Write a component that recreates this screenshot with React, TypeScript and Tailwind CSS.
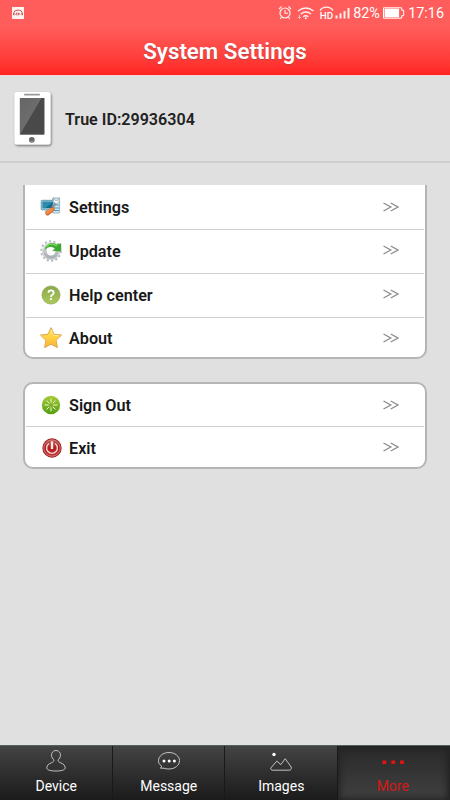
import React from 'react';
import clsx from 'clsx';

interface MenuItem {
  label: string;
  icon: React.ReactNode;
}

function SettingsIcon() {
  return (
    <svg width="22" height="22" viewBox="0 0 22 22">
      <rect x="12.6" y="2" width="7" height="15" rx="0.8" fill="#d6e8f1" stroke="#7798aa" strokeWidth="0.7" />
      <path d="M14.5 9h4.5M15 12h4M13 14.5h6" stroke="#4c98bb" strokeWidth="1" />
      <rect x="1.2" y="4.3" width="13" height="9.5" rx="0.7" fill="#b9dbe7" stroke="#43859f" strokeWidth="0.8" />
      <rect x="2.6" y="5.7" width="10.3" height="6.6" fill="#106d91" />
      <path d="M2.6 5.7h10.3L5 12.3H2.6z" fill="#2f8dab" />
      <path d="M5.5 14h5l.8 2H4.5z" fill="#b5c6ce" />
      <path d="M12.5 11L17 6.2" stroke="#8a989e" strokeWidth="2.4" />
      <path d="M13.4 1.6v4.1l2.9 2.2 3-2.2V1.6l-1.6 2.8h-2.5z" fill="#f7fafc" stroke="#8998a1" strokeWidth="0.6" />
      <path d="M7.5 17.2l4.8-3.8" stroke="#bd5521" strokeWidth="4.4" strokeLinecap="round" />
      <path d="M7.5 17l4.8-3.7" stroke="#f3833c" strokeWidth="3.4" strokeLinecap="round" />
      <path d="M7 16l4.4-3.5" stroke="#ffad70" strokeWidth="0.8" />
    </svg>
  );
}

function UpdateIcon() {
  return (
    <svg width="24" height="24" viewBox="0 0 24 24">
      <defs>
        <linearGradient id="gear" x1="0" y1="0" x2="0" y2="1">
          <stop offset="0" stopColor="#d9dde0" />
          <stop offset="1" stopColor="#a8aeb2" />
        </linearGradient>
      </defs>
      <circle cx="12" cy="12" r="9.7" fill="none" stroke="#b2b7bb" strokeWidth="2" strokeDasharray="2 2.35" />
      <circle cx="12" cy="12" r="6.8" fill="none" stroke="url(#gear)" strokeWidth="4.6" />
      <circle cx="12" cy="12" r="8.4" fill="none" stroke="#eceeef" strokeWidth="0.8" />
      <path d="M6 10.5C6.8 5.2 12.6 2.4 18 5.7L22 4.6V12.2L13.6 11.8l2.4-2.4C13 6.8 8.4 7.3 6 10.5z" fill="#37a92e" stroke="#4cae3b" strokeWidth="0.4" />
      <path d="M7.6 7.7C10 4.7 14.2 4.6 18 7" fill="none" stroke="#82d858" strokeWidth="1.4" />
    </svg>
  );
}

function HelpIcon() {
  return (
    <svg width="20" height="20" viewBox="0 0 20 20">
      <defs>
        <linearGradient id="help" x1="0" y1="0" x2="0" y2="1">
          <stop offset="0" stopColor="#8aa84b" />
          <stop offset="1" stopColor="#adc95a" />
        </linearGradient>
      </defs>
      <circle cx="10" cy="10" r="9.1" fill="url(#help)" stroke="#86a24b" strokeWidth="0.6" />
      <path d="M7.4 7.7Q7.5 5.3 10 5.3t2.7 2.4q0 1.3-1.4 2.1-1.3.7-1.3 2.1" fill="none" stroke="#fff" strokeWidth="1.8" />
      <circle cx="10" cy="14.1" r="1.1" fill="#fff" />
    </svg>
  );
}

function StarIcon() {
  return (
    <svg width="24" height="24" viewBox="0 0 24 24">
      <defs>
        <linearGradient id="star" x1="0" y1="0" x2="0" y2="1">
          <stop offset="0" stopColor="#ffe568" />
          <stop offset="0.5" stopColor="#ffd243" />
          <stop offset="1" stopColor="#f9b138" />
        </linearGradient>
      </defs>
      <path
        d="M12 1.6l3.1 6.7 7.4.8-5.4 5.2 1.3 7.3-6.4-3.4-6.4 3.4 1.3-7.3-5.4-5.2 7.4-.8z"
        fill="url(#star)"
        stroke="#e0a84b"
        strokeWidth="1"
        strokeLinejoin="round"
      />
      <path d="M12 4l2.2 5.2 5.2.6" fill="none" stroke="#fff1a0" strokeWidth="0.8" />
    </svg>
  );
}

function SignOutIcon() {
  return (
    <svg width="20" height="20" viewBox="0 0 20 20">
      <defs>
        <linearGradient id="signout" x1="0" y1="0" x2="0" y2="1">
          <stop offset="0" stopColor="#a8cc35" />
          <stop offset="1" stopColor="#549d14" />
        </linearGradient>
      </defs>
      <circle cx="10" cy="10" r="9.2" fill="url(#signout)" />
      <path
        d="M10 4v3.3M10 12.7V16M4 10h3.3M12.7 10H16M5.8 5.8l2.3 2.3M11.9 11.9l2.3 2.3M5.8 14.2l2.3-2.3M11.9 8.1l2.3-2.3"
        stroke="#f0f8dc"
        strokeWidth="1"
        strokeLinecap="round"
      />
    </svg>
  );
}

function ExitIcon() {
  return (
    <svg className="ml-px" width="20" height="20" viewBox="0 0 20 20">
      <defs>
        <linearGradient id="exit" x1="0" y1="0" x2="0" y2="1">
          <stop offset="0" stopColor="#c35b58" />
          <stop offset="0.5" stopColor="#b21b1c" />
          <stop offset="1" stopColor="#c93430" />
        </linearGradient>
      </defs>
      <circle cx="10" cy="10" r="9.7" fill="#9c2424" />
      <circle cx="10" cy="10" r="8.2" fill="url(#exit)" stroke="#dc8d88" strokeWidth="0.8" />
      <path d="M7 5.5a5.4 5.4 0 1 0 6 0" fill="none" stroke="#f4dada" strokeWidth="1.4" />
      <path d="M10 3.3v7.7" stroke="#f8e8e8" strokeWidth="2.4" />
    </svg>
  );
}

const mainItems: MenuItem[] = [
  { label: 'Settings', icon: <SettingsIcon /> },
  { label: 'Update', icon: <UpdateIcon /> },
  { label: 'Help center', icon: <HelpIcon /> },
  { label: 'About', icon: <StarIcon /> },
];

const accountItems: MenuItem[] = [
  { label: 'Sign Out', icon: <SignOutIcon /> },
  { label: 'Exit', icon: <ExitIcon /> },
];

function MenuGroup({ items, className }: { items: MenuItem[]; className: string }) {
  return (
    <div className={clsx('mx-[23px] grid border-[#b5b5b5] bg-white px-px', className)}>
      {items.map((item, i) => (
        <button
          key={item.label}
          className={clsx(
            'flex items-center pr-[25px] pl-[13px]',
            i > 0 && 'border-t-[1.5px] border-[#d0d0d0]',
            i > 0 && i < items.length - 1 && 'pb-[2px]',
            i === items.length - 1 && 'pt-px'
          )}
        >
          <span className="flex w-6 shrink-0 justify-center">{item.icon}</span>
          <span className="ml-[6px] pt-[2px] text-[16.2px] leading-5 font-semibold text-[#181818]">{item.label}</span>
          <svg className="mb-px ml-auto" width="16" height="10" viewBox="0 0 16 10" fill="none" stroke="#8c8c8c" strokeWidth="1.3">
            <path d="M.5 1l7.3 4-7.3 4M7.7 1L15 5 7.7 9" />
          </svg>
        </button>
      ))}
    </div>
  );
}

function StatusBar() {
  return (
    <div className="flex h-[26px] items-center pr-[6px] pl-3 text-white">
      <svg width="12" height="12" viewBox="0 0 12 12">
        <rect width="12" height="12" fill="#fff4f2" />
        <path d="M1.5 8V6.4Q2 3 6 3t4.5 3.4V8M2 6v2.3M10 6v2.3" fill="none" stroke="#c55a55" strokeWidth="1" />
        <path d="M3.5 7.8l1.4-2.1v2.8M6.5 5.8v2.5M8 7.8l-1-1.7" stroke="#b84b49" strokeWidth="0.8" fill="none" />
      </svg>
      <svg className="ml-auto" width="73" height="16" viewBox="0 0 73 16" fill="none" stroke="#fff" strokeOpacity="0.9">
        <circle cx="7" cy="8" r="5" strokeWidth="1.2" />
        <path d="M7 5v3.3h3M1 4l2.6-2.5M13 4l-2.6-2.5M3.4 12.3L2.3 14M10.6 12.3l1.1 1.7" strokeWidth="1.1" />
        <path d="M20 6q8-6 15.5 0M22.7 9q5.3-3.9 10.3 0M25.2 11.7q2.6-2 5.2 0" strokeWidth="1.4" />
        <circle cx="27.8" cy="13.3" r="1" fill="#fff" stroke="none" />
        <path d="M21.5 10v3M20 12l1.5 1.5L23 12" strokeWidth="0.7" />
        <path d="M42.5 5.8V4.4q6-4.4 12 0v1.4" strokeWidth="1.3" />
        <text x="41.8" y="14.2" fontSize="9.8" fontWeight="500" fontFamily="Roboto, sans-serif" fill="#fff" stroke="none">HD</text>
        <path d="M58.5 13.5v-3M62.5 13.5V8.3M66.5 13.5V6M70.5 13.5V3" strokeWidth="2" />
      </svg>
      <span className="ml-[2px] w-[28px] pt-px font-[Roboto,sans-serif] text-[14.4px] leading-4 whitespace-nowrap">82%</span>
      <svg className="ml-[2px]" width="22" height="12" viewBox="0 0 22 12">
        <path d="M.5.8h18.2v2.5h2v5.4h-2v2.5H.5z" fill="none" stroke="#fff" />
        <rect x="1.6" y="1.7" width="14.5" height="8.6" fill="#fff" />
      </svg>
      <span className="ml-[3px] pt-px font-[Roboto,sans-serif] text-[14.4px] leading-4">17:16</span>
    </div>
  );
}

function PhoneIcon() {
  return (
    <svg width="44" height="60" viewBox="0 0 44 60">
      <defs>
        <linearGradient id="phoneScreen" x1="0" y1="0" x2="1" y2="1">
          <stop offset="0" stopColor="#666" />
          <stop offset="1" stopColor="#747474" />
        </linearGradient>
        <filter id="phoneShadow" x="-20%" y="-20%" width="150%" height="150%">
          <feDropShadow dx="0.8" dy="1.3" stdDeviation="1" floodColor="#000" floodOpacity="0.55" />
        </filter>
      </defs>
      <rect x="4.5" y="3" width="36" height="52.5" rx="2.5" fill="#fff" filter="url(#phoneShadow)" />
      <rect x="14" y="4.7" width="16" height="1.8" rx="0.8" fill="#999" />
      <rect x="9.8" y="9" width="24.5" height="36.5" fill="url(#phoneScreen)" />
      <path d="M31.5 9h2.8v36.5H10z" fill="#494949" />
      <circle cx="21.8" cy="50.8" r="2.9" fill="#666" />
      <path d="M20 51.5a2 2 0 0 0 3.6 0" stroke="#aaa" strokeWidth="0.8" fill="none" />
    </svg>
  );
}

const tabs = [
  {
    label: 'Device',
    icon: (
      <path d="M8.6 10.7C4.5 6.3 7 1.5 11 1.5s6.5 4.8 2.4 9.2c-.7 1.2 0 2.2 2.1 3.1 3.2 1.2 4.7 2.7 4.7 5.2 0 2-4 3-9.2 3s-9.2-1-9.2-3c0-2.5 1.5-4 4.7-5.2 2.1-.9 2.8-1.9 2.1-3.1z" />
    ),
  },
  {
    label: 'Message',
    icon: (
      <>
        <path d="M3.7 17.2C.8 15.2.5 13.4.5 11.7.5 7.2 5 3.5 11 3.5s10.5 3.7 10.5 8.2-4.5 8.3-10.5 8.3c-2 0-3.5-.2-5-.8H2.5l1.2-2z" />
        <g fill="#fff" stroke="none">
          <circle cx="6" cy="12.1" r="1.5" />
          <circle cx="11.2" cy="12.1" r="1.5" />
          <circle cx="16.4" cy="12.1" r="1.5" />
        </g>
      </>
    ),
  },
  {
    label: 'Images',
    icon: (
      <>
        <circle cx="4" cy="5.5" r="1.7" fill="#fff" stroke="none" />
        <path d="M.8 19l6-6.9 4 3.5 4.4-5.9 6 8.3c.5 1.8-.3 3.2-2 3.2H2.7c-1.3 0-2.3-.9-1.9-2.2z" />
      </>
    ),
  },
  {
    label: 'More',
    icon: (
      <g fill="#df1515" stroke="none">
        <rect x="0.5" y="11.5" width="3.8" height="3.5" />
        <rect x="9.3" y="11.5" width="3.8" height="3.5" />
        <rect x="18.1" y="11.5" width="3.8" height="3.5" />
      </g>
    ),
  },
];

function TabBar({ active }: { active: string }) {
  return (
    <nav className="grid h-[55px] grid-cols-4 border-t border-[#56605e] bg-[#222]">
      {tabs.map(tab => (
        <button
          key={tab.label}
          className={clsx(
            'flex flex-col items-center border-r pt-[3px] text-[14px] leading-4',
            tab.label === active
              ? 'border-[#252525] bg-linear-to-b from-[#292929] to-[#414141] pr-px text-[#d51818] shadow-[inset_0_0_6px_2px_#222]'
              : 'border-[#151b1d] bg-linear-to-b from-[#444] to-[#1b1b1b] pl-px text-white'
          )}
        >
          <svg width="22" height="23" viewBox="0 0 22 23" fill="none" stroke="#d2d2d2" strokeWidth="0.9">
            {tab.icon}
          </svg>
          <span className="mt-[6px]">{tab.label}</span>
        </button>
      ))}
    </nav>
  );
}

export default function App() {
  return (
    <div className="flex h-[800px] w-[450px] flex-col overflow-hidden bg-[#e0e0e0] font-[Roboto,sans-serif]">
      <header className="h-[75px] bg-linear-to-b from-[#ff5d5b] from-35% to-[#ff2221]">
        <StatusBar />
        <h1 className="pt-[11px] text-center text-[22.3px] leading-7 font-semibold text-white [text-shadow:0_1px_1px_#b94444]">System Settings</h1>
      </header>

      <section className="flex h-[88px] items-center border-t border-b-2 border-t-[#efd7d7] border-b-[#cfcfcf] pl-[10px]">
        <PhoneIcon />
        <span className="ml-[11px] pt-[3px] text-[16.1px] font-semibold text-[#222]">True ID:29936304</span>
      </section>

      <MenuGroup items={mainItems} className="mt-[22px] h-[174px] grid-rows-[44px_44px_44px_1fr] rounded-b-[10px] border-x-2 border-b-2" />
      <MenuGroup items={accountItems} className="mt-[23px] h-[87px] grid-rows-[42px_1fr] rounded-[10px] border-2" />

      <div className="flex-1" />
      <TabBar active="More" />
    </div>
  );
}
